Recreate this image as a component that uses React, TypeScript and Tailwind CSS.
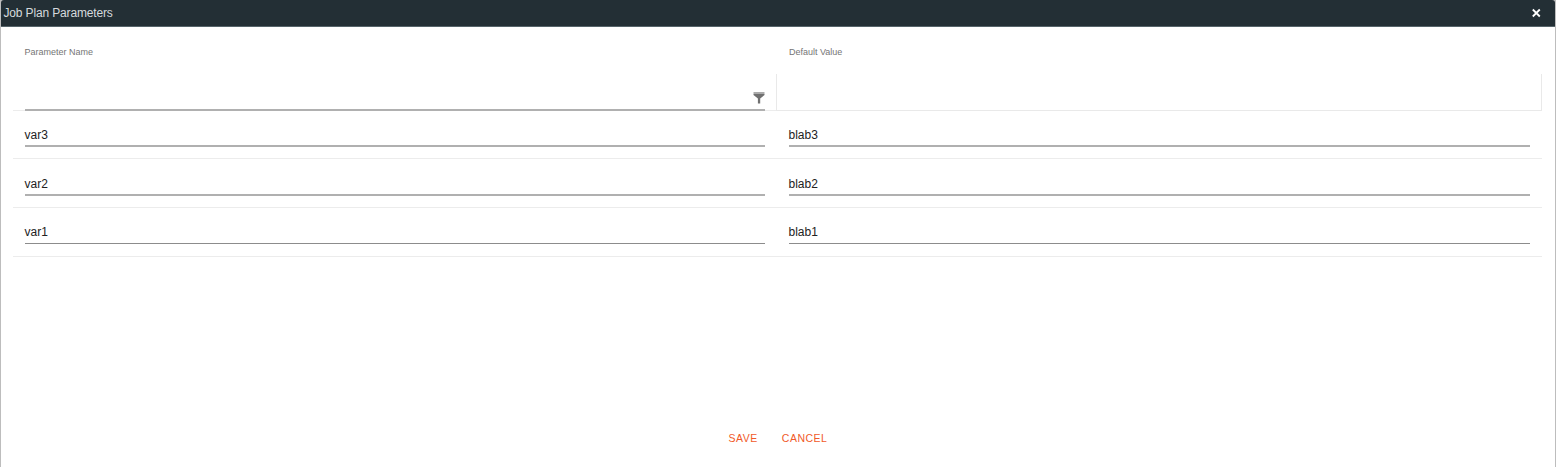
import React from "react";

const rows = [
  { name: "var3", value: "blab3", height: "h-[48px]", pad: "pt-[15px]", line: "border-b-2 border-[#b0b0b0]" },
  { name: "var2", value: "blab2", height: "h-[49px]", pad: "pt-[16px]", line: "border-b-2 border-[#b0b0b0]" },
  { name: "var1", value: "blab1", height: "h-[49px]", pad: "pt-[15px]", line: "border-b border-[#8c8c8c]" },
];

function Field({ value, pad, line }: { value: string; pad: string; line: string }) {
  return (
    <div className={`pr-3 pl-[11.5px] ${pad}`}>
      <div className={`h-[21px] text-[12px] leading-[18px] text-[#222] ${line}`}>{value}</div>
    </div>
  );
}

export default function App() {
  return (
    <div className="h-[467px] w-full overflow-hidden bg-[#bdbdbd] px-px font-['Liberation_Sans',sans-serif]">
      <div className="flex h-full flex-col">
        <header className="flex h-[27px] shrink-0 items-center justify-between rounded-t-[3px] border-b border-[#56646a] bg-[#232f35] pr-[14px] pl-[2.5px]">
          <h1 className="text-[12px] leading-[16px] font-normal tracking-[-0.15px] text-[#d5dadd]">
            Job Plan Parameters
          </h1>
          <svg width="10" height="10" viewBox="0 0 10 10" aria-label="Close">
            <path d="M1.8 1.5 8.8 8.5M8.8 1.5 1.8 8.5" stroke="#fff" strokeWidth="1.8" />
          </svg>
        </header>
        <main className="flex flex-1 flex-col bg-white pr-[13px] pl-[12px]">
          <div className="grid h-[47px] grid-cols-[764px_1fr] text-[9px] leading-[12px] text-[#757575]">
            <div className="pt-[19px] pr-3 pl-[11.5px]">Parameter Name</div>
            <div className="px-3 pt-[19px]">Default Value</div>
          </div>
          <div className="grid h-[37px] grid-cols-[764px_1fr]">
            <div className="flex border-b border-[#ececec] px-3">
              <div className="-mb-px flex flex-1 items-end justify-end border-b-2 border-[#b0b0b0] pb-[5px]">
                <svg width="12" height="13" viewBox="0 0 12 13" aria-label="Filter">
                  <path d="M0.5 1h11v2h-11z" fill="#aaa" />
                  <path d="M0.5 3h11v1L7.2 7.6v4.9H4.9V7.6L.5 4z" fill="#707070" />
                </svg>
              </div>
            </div>
            <div className="-ml-px border-r border-b border-l border-[#e9e9e9]" />
          </div>
          {rows.map((row) => (
            <div
              key={row.name}
              className={`grid grid-cols-[764px_1fr] border-b border-[#ececec] ${row.height}`}
            >
              <Field value={row.name} pad={row.pad} line={row.line} />
              <Field value={row.value} pad={row.pad} line={row.line} />
            </div>
          ))}
          <div className="mt-auto mb-[21px] flex h-[16px] justify-center gap-[24px] pl-px text-[10.5px] leading-[16px] tracking-[0.5px] text-[#f15a29]">
            <button>SAVE</button>
            <button>CANCEL</button>
          </div>
        </main>
      </div>
    </div>
  );
}
